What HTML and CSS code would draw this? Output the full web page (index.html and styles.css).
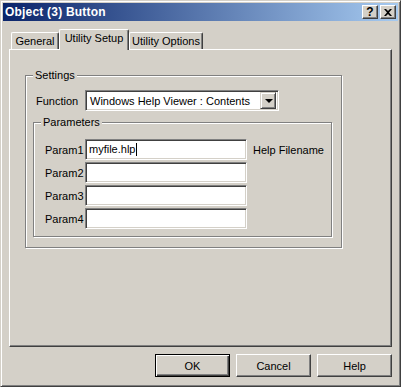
FILE: index.html
```html
<!DOCTYPE html>
<html lang="en">
<head>
  <meta charset="UTF-8">
  <title>Object (3) Button</title>
  <link rel="stylesheet" href="styles.css">
</head>
<body>
  <div class="window">
    <div class="titlebar">
      <span class="title">Object (3) Button</span>
      <span class="caption-btn help-btn">?</span>
      <span class="caption-btn close-btn">
        <svg width="8" height="7" viewBox="0 0 8 7"><path d="M0 0h2l2 2 2-2h2L5 3.5 8 7H6L4 5 2 7H0l3-3.5z" fill="#000"/></svg>
      </span>
    </div>

    <div class="content">
      <div class="tabstrip">
        <div class="tab tab-general">General</div>
        <div class="tab tab-active">Utility Setup</div>
        <div class="tab tab-options">Utility Options</div>
      </div>

      <div class="tabpanel">
        <div class="groupbox settings">
          <span class="group-label">Settings</span>
          <div class="function-row">
            <span class="function-label">Function</span>
            <div class="combo">
              <span class="combo-text">Windows Help Viewer : Contents</span>
              <span class="combo-btn"><span class="arrow"></span></span>
            </div>
          </div>

          <div class="groupbox params">
            <span class="group-label">Parameters</span>
            <div class="param-row">
              <span class="param-label">Param1</span>
              <div class="field">myfile.hlp<span class="caret"></span></div>
              <span class="hint">Help Filename</span>
            </div>
            <div class="param-row">
              <span class="param-label">Param2</span>
              <div class="field"></div>
            </div>
            <div class="param-row">
              <span class="param-label">Param3</span>
              <div class="field"></div>
            </div>
            <div class="param-row">
              <span class="param-label">Param4</span>
              <div class="field"></div>
            </div>
          </div>
        </div>
      </div>

      <div class="button-row">
        <div class="btn btn-default"><span>OK</span></div>
        <div class="btn">Cancel</div>
        <div class="btn">Help</div>
      </div>
    </div>
  </div>
</body>
</html>
```

FILE: styles.css
```css
html, body {
  margin: 0;
  padding: 0;
  background: #d4d0c8;
}
body {
  font-family: 'Liberation Sans', Arial, sans-serif;
  font-size: 11px;
  color: #000;
}
.window {
  width: 401px;
  height: 387px;
  box-sizing: border-box;
  border: 1px solid;
  border-color: #d4d0c8 #404040 #404040 #d4d0c8;
  box-shadow: inset 1px 1px #fff, inset -1px -1px #808080;
  padding: 2px;
  background: #d4d0c8;
  display: flex;
  flex-direction: column;
}

/* --- title bar --- */
.titlebar {
  height: 18px;
  display: flex;
  align-items: center;
  padding: 0 2px 0 2px;
  background: linear-gradient(90deg, #0a246a 0%, #a6caf0 100%);
}
.title {
  flex: 1;
  color: #fff;
  font-weight: bold;
  font-size: 12px;
  letter-spacing: 0.2px;
}
.caption-btn {
  width: 16px;
  height: 14px;
  box-sizing: border-box;
  background: #d4d0c8;
  border: 1px solid;
  border-color: #fff #404040 #404040 #fff;
  box-shadow: inset -1px -1px #808080;
  display: flex;
  align-items: center;
  justify-content: center;
}
.help-btn {
  font-weight: bold;
  font-size: 12px;
  line-height: 12px;
  padding-bottom: 1px;
}
.close-btn {
  margin-left: 2px;
}

/* --- tabs --- */
.content {
  padding: 8px 5px 0 6px;
}
.tabstrip {
  display: flex;
  align-items: flex-end;
  height: 20px;
  padding-left: 2px;
}
.tab {
  box-sizing: border-box;
  height: 17px;
  border-top: 1px solid #fff;
  border-left: 1px solid #fff;
  border-right: 1px solid #404040;
  border-radius: 2px 2px 0 0;
  box-shadow: inset -1px 0 #808080;
  text-align: center;
  line-height: 17px;
}
.tab-general { width: 48px; }
.tab-options { width: 74px; }
.tab-active {
  width: 70px;
  height: 21px;
  margin-bottom: -1px;
  position: relative;
  z-index: 1;
  background: #d4d0c8;
  line-height: 16px;
}
.tabpanel {
  width: 383px;
  height: 298px;
  box-sizing: border-box;
  border: 1px solid;
  border-color: #fff #404040 #404040 #fff;
  box-shadow: inset -1px -1px #808080;
  padding: 25px 0 0 15px;
}

/* --- group boxes --- */
.groupbox {
  position: relative;
  box-sizing: border-box;
  border: 1px solid #808080;
  box-shadow: inset 1px 1px #fff, 1px 1px #fff;
}
.group-label {
  position: absolute;
  top: -7px;
  left: 7px;
  padding: 0 2px;
  background: #d4d0c8;
  line-height: 13px;
}
.settings {
  width: 317px;
  padding: 14px 0 10px 7px;
}
.function-row {
  display: flex;
  align-items: center;
  padding-left: 3px;
}
.function-label {
  width: 49px;
}
.combo {
  width: 194px;
  height: 21px;
  box-sizing: border-box;
  background: #fff;
  border: 1px solid;
  border-color: #808080 #fff #fff #808080;
  box-shadow: inset 1px 1px #404040, inset -1px -1px #d4d0c8;
  display: flex;
  align-items: center;
  padding: 2px;
}
.combo-text {
  flex: 1;
  padding-left: 2px;
}
.combo-btn {
  width: 16px;
  height: 17px;
  box-sizing: border-box;
  background: #d4d0c8;
  border: 1px solid;
  border-color: #d4d0c8 #404040 #404040 #d4d0c8;
  box-shadow: inset 1px 1px #fff, inset -1px -1px #808080;
  display: flex;
  align-items: center;
  justify-content: center;
}
.arrow {
  width: 0;
  height: 0;
  border-left: 4px solid transparent;
  border-right: 4px solid transparent;
  border-top: 4px solid #000;
  margin-left: 1px;
}
.params {
  width: 299px;
  margin-top: 11px;
  padding: 16px 0 7px 11px;
  display: flex;
  flex-direction: column;
  gap: 2px;
}
.param-row {
  display: flex;
  align-items: center;
}
.param-label {
  width: 40px;
}
.field {
  width: 162px;
  height: 21px;
  box-sizing: border-box;
  background: #fff;
  border: 1px solid;
  border-color: #808080 #fff #fff #808080;
  box-shadow: inset 1px 1px #404040, inset -1px -1px #d4d0c8;
  padding: 0 3px;
  line-height: 19px;
  display: flex;
  align-items: center;
}
.caret {
  display: inline-block;
  width: 1px;
  height: 13px;
  background: #000;
  margin-left: 1px;
}
.hint {
  margin-left: 6px;
}

/* --- dialog buttons --- */
.button-row {
  display: flex;
  justify-content: flex-end;
  gap: 6px;
  width: 383px;
  margin-top: 7px;
}
.btn {
  width: 75px;
  height: 23px;
  box-sizing: border-box;
  border: 1px solid;
  border-color: #fff #404040 #404040 #fff;
  box-shadow: inset -1px -1px #808080;
  display: flex;
  align-items: center;
  justify-content: center;
}
.btn-default {
  border: 1px solid #000;
  box-shadow: inset 1px 1px #fff, inset -1px -1px #404040, inset -2px -2px #808080;
}
```
